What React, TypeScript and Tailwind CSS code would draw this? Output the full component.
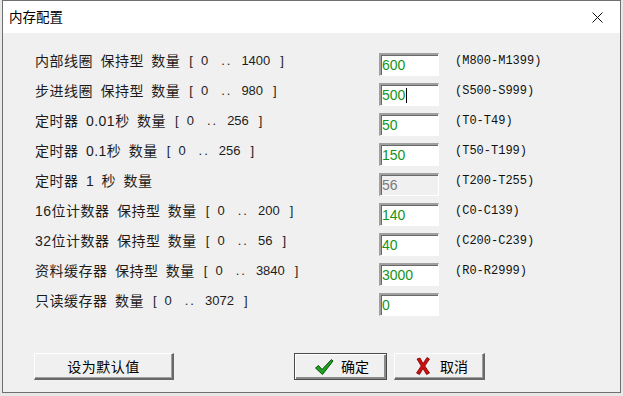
import React from "react";

interface RowItem {
  label: string;
  max?: string;
  value: string;
  range: string;
  disabled?: boolean;
  caret?: boolean;
}

const rows: RowItem[] = [
  { label: "内部线圈 保持型 数量", max: "1400", value: "600", range: "(M800-M1399)" },
  { label: "步进线圈 保持型 数量", max: "980", value: "500", range: "(S500-S999)", caret: true },
  { label: "定时器 0.01秒 数量", max: "256", value: "50", range: "(T0-T49)" },
  { label: "定时器 0.1秒 数量", max: "256", value: "150", range: "(T50-T199)" },
  { label: "定时器 1 秒 数量", value: "56", range: "(T200-T255)", disabled: true },
  { label: "16位计数器 保持型 数量", max: "200", value: "140", range: "(C0-C139)" },
  { label: "32位计数器 保持型 数量", max: "56", value: "40", range: "(C200-C239)" },
  { label: "资料缓存器 保持型 数量", max: "3840", value: "3000", range: "(R0-R2999)" },
  { label: "只读缓存器 数量", max: "3072", value: "0", range: "" },
];

const sans = "font-['Liberation_Sans','Noto_Sans_CJK_SC',sans-serif]";

const CheckIcon = () => (
  <svg width="20" height="18" viewBox="0 0 20 18">
    <path
      d="M1.5 10 L4.5 7.5 L8 11.5 L17.5 1.5 L19 3 L8.5 16.5 Z"
      fill="#1fa31f"
      stroke="#0b4d0b"
      strokeWidth="1"
      strokeLinejoin="round"
    />
  </svg>
);

const CrossIcon = () => (
  <svg width="14" height="18" viewBox="0 0 14 18">
    <path
      d="M1 2 L4 1 L7 6.5 L11 0.5 L13.5 2 L8.8 9 L13.5 16 L10.5 17.5 L7 11.5 L3.5 17.5 L0.5 16 L5.2 9 Z"
      fill="#d01010"
      stroke="#7a0000"
      strokeWidth="0.8"
      strokeLinejoin="round"
    />
  </svg>
);

const App = () => {
  return (
    <div className={`w-[623px] h-[396px] bg-[#e8e8e8] relative overflow-hidden ${sans}`}>
      <div className="absolute left-[2px] top-0 w-[619px] h-[393px] border border-[#6f6f6f] bg-[#f0f0f0] flex flex-col">
        {/* title bar */}
        <div className="h-[32px] bg-white flex items-center justify-between pl-[6px] pr-[17px]">
          <span className="text-[13.5px] text-black font-['Noto_Sans_CJK_SC',sans-serif] leading-none">
            内存配置
          </span>
          <svg width="11" height="11" viewBox="0 0 11 11">
            <path d="M0.5 0.5 L10.5 10.5 M10.5 0.5 L0.5 10.5" stroke="#111" strokeWidth="1" />
          </svg>
        </div>

        {/* body */}
        <div className="flex-1 pt-[13px] pl-[32px]">
          {rows.map((row, i) => (
            <div key={i} className="h-[30px] grid grid-cols-[344px_60px_auto] items-start">
              <div className="h-[30px] flex items-center text-[14px] text-[#1c1c1c] whitespace-pre tracking-[0.5px] [word-spacing:3px]">
                <span>{row.label}</span>
                {row.max && (
                  <span className="flex items-center tracking-normal text-[13px]">
                    <span className="ml-[9px]">[</span>
                    <span className="ml-[8px]">0</span>
                    <span className="ml-[13px] tracking-[2px]">..</span>
                    <span className="ml-[9px]">{row.max}</span>
                    <span className="ml-[10px]">]</span>
                  </span>
                )}
              </div>
              <div
                className={`mt-[7px] h-[23px] border-t-2 border-l-2 border-b border-r border-t-[#a0a0a0] border-l-[#a0a0a0] border-b-white border-r-white shadow-[inset_1px_1px_0_#696969] flex items-center pl-[1px] text-[14px] leading-none ${
                  row.disabled ? "bg-[#f0f0f0] text-[#7a7a7a]" : "bg-white text-[#17931a]"
                }`}
              >
                <span>{row.value}</span>
                {row.caret && <span className="w-[1px] h-[15px] bg-black ml-[1px]" />}
              </div>
              <div className="h-[30px] flex items-center pl-[16px] pb-[1px] text-[12px] text-[#111] font-['Liberation_Mono',monospace] whitespace-pre">
                {row.range}
              </div>
            </div>
          ))}

          {/* buttons */}
          <div className="flex items-start mt-[37px]">
            <button className="-ml-[1px] w-[140px] h-[27px] bg-[#f0f0f0] border-t border-l border-t-white border-l-white border-b-2 border-r-2 border-b-[#696969] border-r-[#696969] shadow-[inset_-1px_-1px_0_#a0a0a0] text-[14px] text-black font-['Noto_Sans_CJK_SC',sans-serif] flex items-center justify-center tracking-[0.5px]">
              设为默认值
            </button>
            <button className="ml-[120px] w-[93px] h-[27px] bg-[#f0f0f0] border border-[#4a4a4a] shadow-[inset_1px_1px_0_#ffffff,inset_-2px_-2px_0_#8a8a8a] text-[14px] text-black font-['Noto_Sans_CJK_SC',sans-serif] flex items-center justify-start gap-[7px] pl-[19px]">
              <CheckIcon />
              <span>确定</span>
            </button>
            <button className="ml-[7px] w-[91px] h-[27px] bg-[#f0f0f0] border-t border-l border-t-white border-l-white border-b-2 border-r-2 border-b-[#696969] border-r-[#696969] shadow-[inset_-1px_-1px_0_#a0a0a0] text-[14px] text-black font-['Noto_Sans_CJK_SC',sans-serif] flex items-center justify-start gap-[10px] pl-[21px]">
              <CrossIcon />
              <span>取消</span>
            </button>
          </div>
        </div>
      </div>
    </div>
  );
};

export default App;
